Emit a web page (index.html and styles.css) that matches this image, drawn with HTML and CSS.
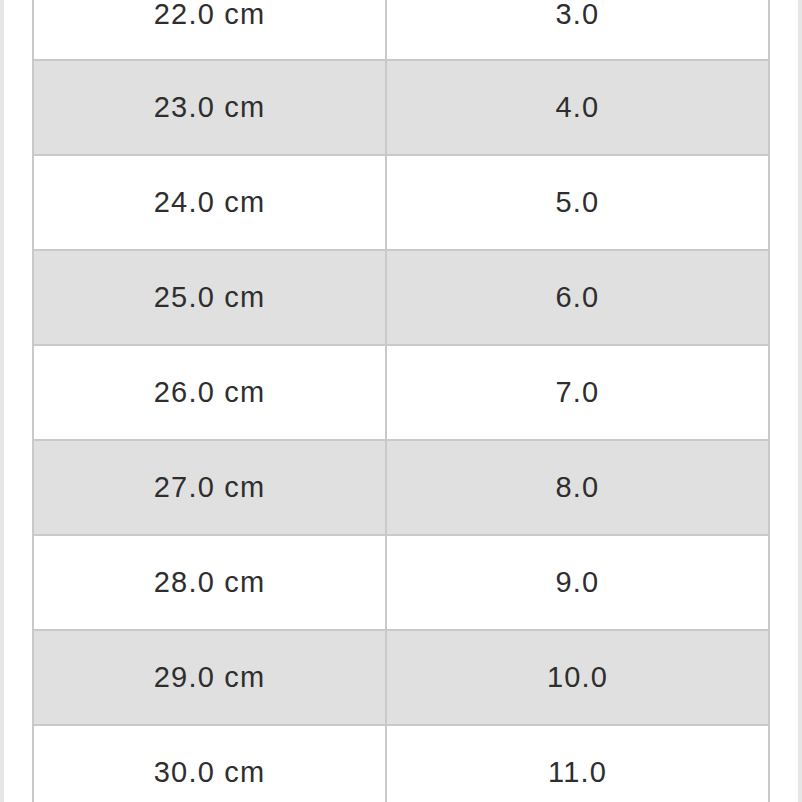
FILE: index.html
```html
<!DOCTYPE html>
<html>
<head>
<meta charset="utf-8">
<link rel="stylesheet" href="styles.css">
</head>
<body>
<div class="page">
  <table class="size-table">
    <tr class="odd first"><td>22.0 cm</td><td>3.0</td></tr>
    <tr class="even"><td>23.0 cm</td><td>4.0</td></tr>
    <tr class="odd"><td>24.0 cm</td><td>5.0</td></tr>
    <tr class="even"><td>25.0 cm</td><td>6.0</td></tr>
    <tr class="odd"><td>26.0 cm</td><td>7.0</td></tr>
    <tr class="even"><td>27.0 cm</td><td>8.0</td></tr>
    <tr class="odd"><td>28.0 cm</td><td>9.0</td></tr>
    <tr class="even"><td>29.0 cm</td><td>10.0</td></tr>
    <tr class="odd"><td>30.0 cm</td><td>11.0</td></tr>
  </table>
</div>
</body>
</html>
```
FILE: styles.css
```css
html, body {
  margin: 0;
  padding: 0;
  height: 802px;
  overflow: hidden;
  background: #e6e6e6;
}
.page {
  margin: 0 4px;
  height: 802px;
  background: #ffffff;
  padding: 0 32px 0 28px;
  overflow: hidden;
}
.size-table {
  border-collapse: collapse;
  width: 738px;
  margin-top: -36px;
  font-family: "Liberation Sans", Arial, sans-serif;
  font-size: 29px;
  color: #2e2e2e;
  table-layout: fixed;
}
.size-table td {
  border: 2px solid #c9c9c9;
  height: 93px;
  padding: 0;
  text-align: center;
  vertical-align: middle;
  letter-spacing: 1.2px;
}
.size-table tr.first td {
  padding-top: 4px;
  height: 89px;
}
.size-table td:first-child {
  width: 351px;
}
.size-table tr.even td {
  background: #e0e0e0;
}
.size-table tr.odd td {
  background: #ffffff;
}
```
